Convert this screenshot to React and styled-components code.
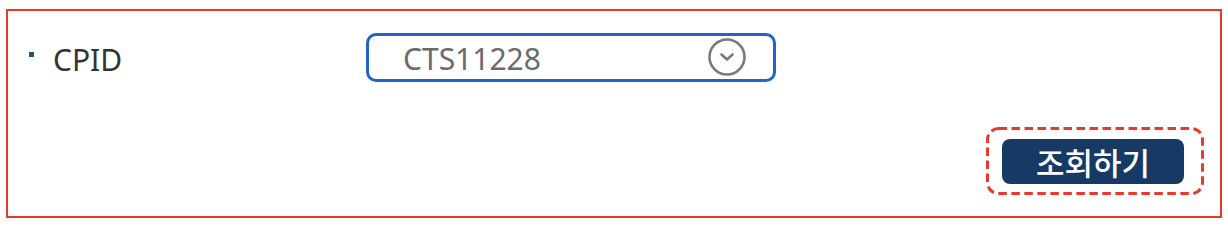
import React from "react";
import styled, { createGlobalStyle } from "styled-components";

const GlobalStyle = createGlobalStyle`
	html, body {
		margin: 0;
		padding: 0;
		background: #ffffff;
	}
	body {
		font-family: "Noto Sans", "Noto Sans CJK KR", sans-serif;
	}
`;

const App = () => {
	return (
		<>
			<GlobalStyle />
			<Page>
				<Panel>
					<Row>
						<Label>
							<Bullet />
							CPID
						</Label>
						<Select>
							<SelectValue>CTS11228</SelectValue>
							<Chevron viewBox="0 0 40 40" aria-hidden="true">
								<circle cx="20" cy="20" r="17.5" fill="none" stroke="#7a7a7a" strokeWidth="2.6" />
								<path d="M14.5 17.5 L20 22.5 L25.5 17.5" fill="none" stroke="#7a7a7a" strokeWidth="2.6" strokeLinecap="round" strokeLinejoin="round" />
							</Chevron>
						</Select>
					</Row>
					<Footer>
						<Highlight>
							<DashFrame viewBox="0 0 218 68" aria-hidden="true">
								<rect x="1.5" y="1.5" width="215" height="65" rx="11" ry="11" fill="none" stroke="#e8392c" strokeWidth="3" strokeDasharray="8.5 4.5" />
							</DashFrame>
							<SearchButton type="button">조회하기</SearchButton>
						</Highlight>
					</Footer>
				</Panel>
			</Page>
		</>
	);
};

export default App;

const Page = styled.div`
	padding: 9px 0 0 6px;
	width: 1228px;
	height: 228px;
	box-sizing: border-box;
`;

const Panel = styled.div`
	width: 1216px;
	height: 209px;
	box-sizing: border-box;
	border: 2px solid #e8392c;
	display: flex;
	flex-direction: column;
`;

const Row = styled.div`
	display: flex;
	align-items: center;
	margin-top: 22px;
`;

const Label = styled.div`
	display: flex;
	align-items: center;
	width: 358px;
	box-sizing: border-box;
	padding: 4px 0 0 21px;
	font-size: 30px;
	color: #333333;
`;

const Bullet = styled.span`
	width: 5px;
	height: 5px;
	background: #24507f;
	margin-right: 19px;
	margin-top: -10px;
`;

const Select = styled.div`
	width: 410px;
	height: 49px;
	box-sizing: border-box;
	border: 3px solid #2264c8;
	border-radius: 10px;
	display: flex;
	align-items: center;
	justify-content: space-between;
	padding: 0 26px 0 34px;
`;

const SelectValue = styled.span`
	font-size: 30px;
	color: #6b6b6b;
	padding-top: 2px;
`;

const Chevron = styled.svg`
	width: 40px;
	height: 40px;
	margin-top: -2px;
`;

const Footer = styled.div`
	margin-top: auto;
	display: flex;
	justify-content: flex-end;
	padding: 0 16px 21px 0;
`;

const Highlight = styled.div`
	position: relative;
	width: 218px;
	height: 68px;
	display: flex;
	align-items: center;
	padding-left: 16px;
	box-sizing: border-box;
`;

const DashFrame = styled.svg`
	position: absolute;
	inset: 0;
	width: 218px;
	height: 68px;
	pointer-events: none;
`;

const SearchButton = styled.button`
	width: 182px;
	height: 45px;
	border: none;
	border-radius: 8px;
	background: #173a64;
	color: #ffffff;
	font-family: "Noto Sans CJK KR", "Noto Sans", sans-serif;
	font-size: 31px;
	font-weight: 500;
	padding: 0 0 3px;
	cursor: pointer;
`;
